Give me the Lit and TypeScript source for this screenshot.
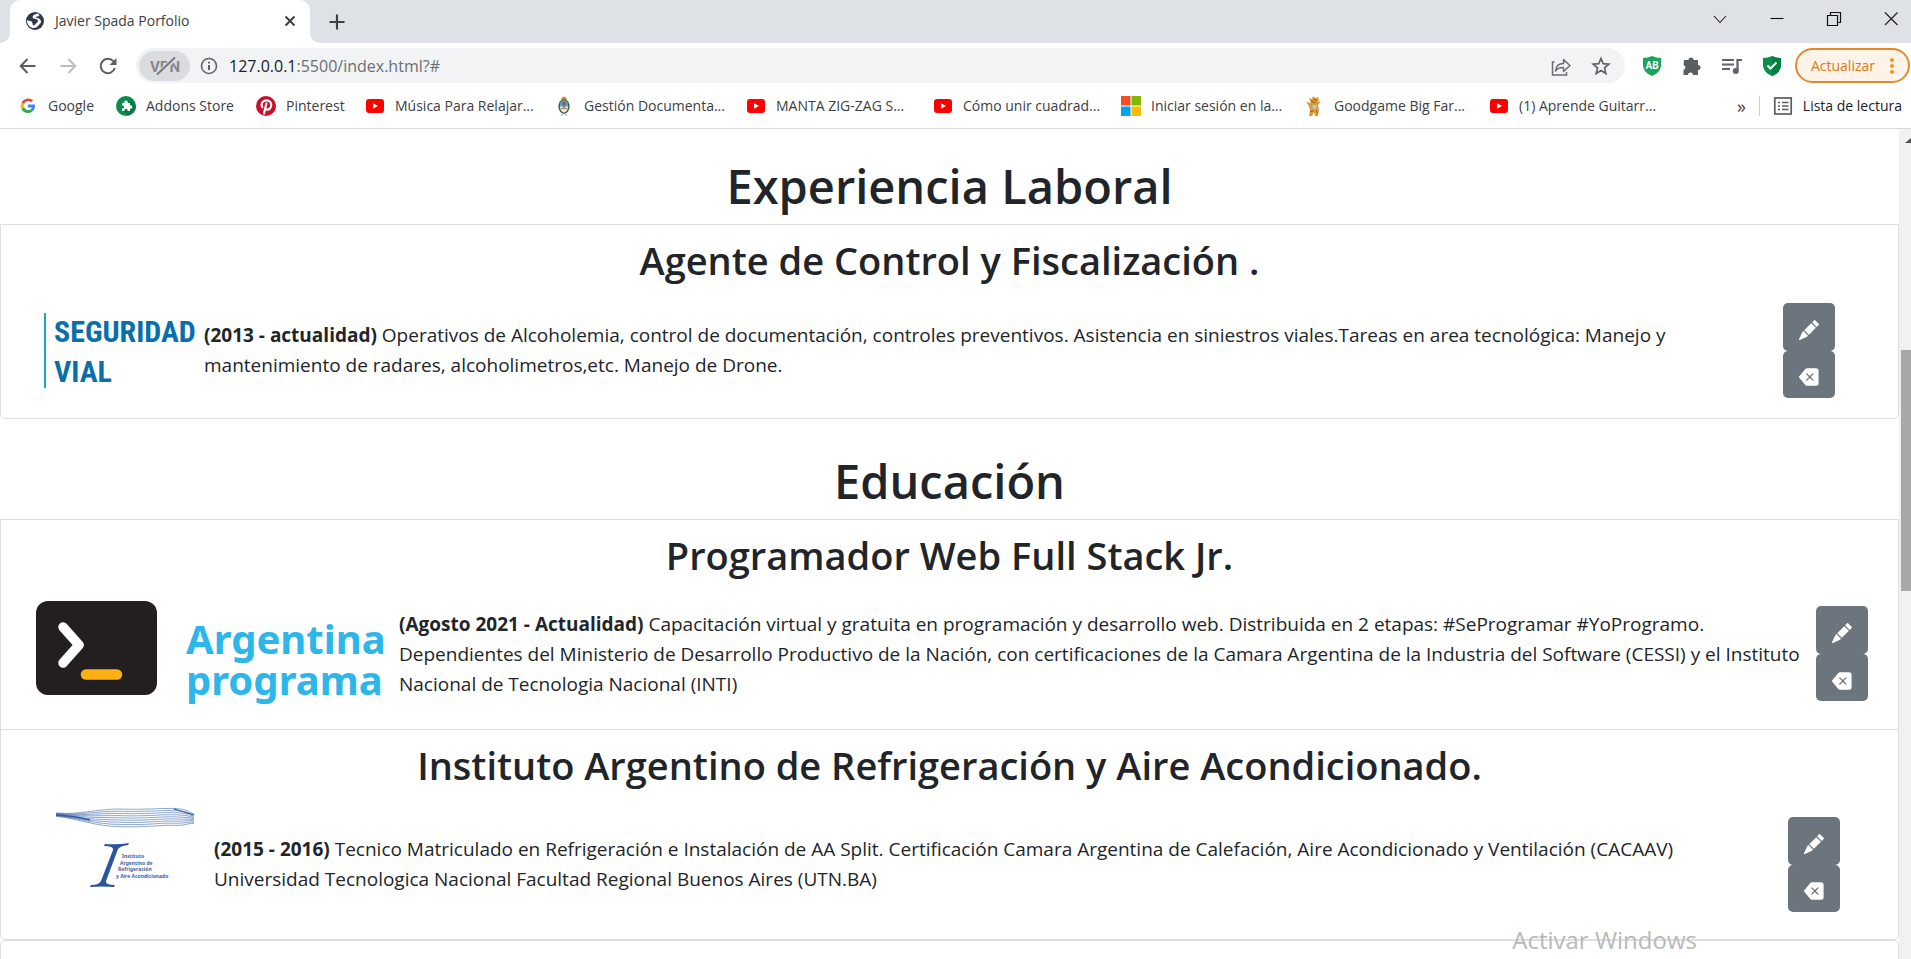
import { LitElement, html, css, svg, nothing, TemplateResult } from "lit";
import { customElement, property } from "lit/decorators.js";

const youtube = svg`<rect x="1" y="3" width="18" height="14" rx="3" fill="#f00"/><path d="M8 7.2v5.6l5-2.8z" fill="#fff"/>`;

const icons: Record<string, TemplateResult> = {
  globe: svg`<circle cx="10" cy="10" r="9" fill="#2f3747"/><path d="M13.5 2.6c-2 .2-4 .8-5.300 2-1 1-.8 2.400.5 3 1.300.6 3.300.4 4 1.500.8 1.300-.2 2.400-1.500 3.200-1 .7-1.200 1.900-2.400 2.200-.9.200-1.200-1.300-1.300-2.300-.2-1.500-1.500-2.200-3-2.500L2 9.300c-.1 3.400 2 6.500 5 7.500 2.600.8 4.800-.3 6.200-2 1-1.300 2.600-2 2.800-3.700.2-1.600-.8-2.600-2-3.500-1-.6-2.400-.5-3.200-1-.4-.5.300-1 1.100-1.100 1.100-.2 2.100-.2 2.400-1.100z" fill="#fff"/>`,
  google: svg`<g transform="translate(1.200 1.200) scale(.86)"><path d="M10 4.300c1.500 0 2.800.5 3.800 1.500l2.300-2.300A9 9 0 0 0 2.700 6l3 2.300A4.700 4.700 0 0 1 10 4.300z" fill="#ea4335"/><path d="M2.700 6a8.600 8.600 0 0 0 0 8l3-2.300a4.800 4.800 0 0 1 0-3.400z" fill="#fbbc05"/><path d="M10 18.500c2.300 0 4.300-.8 5.700-2.100l-2.800-2.200A4.900 4.900 0 0 1 5.700 11.700l-3 2.300a8.500 8.500 0 0 0 7.300 4.500z" fill="#34a853"/><path d="M18.300 8.500H10v3.400h4.700a4 4 0 0 1-1.800 2.400l2.800 2.100c2.300-2.100 3-5 2.600-7.900z" fill="#4285f4"/></g>`,
  addons: svg`<circle cx="10" cy="10" r="10" fill="#0b8a4b"/><path d="M14 3.500 20 10a10 10 0 0 1-8 9.800L6 14z" fill="#077a40"/><path d="M6 7h2.300a1.800 1.800 0 1 1 3.400 0H14v2.300a1.800 1.800 0 1 1 0 3.400V15h-2.600a1.600 1.600 0 1 0-2.800 0H6v-2.500a1.600 1.600 0 1 0 0-3z" fill="#fff"/>`,
  pinterest: svg`<circle cx="10" cy="10" r="10" fill="#c8102a"/><path d="M6.300 11.200C4.300 7.800 6.700 4.400 10.400 4.400c3 0 5 1.900 4.800 4.700-.2 2.700-1.900 4.600-4 4.500-.8 0-1.500-.4-1.800-1M10.400 7.500 8 17.500" fill="none" stroke="#fff" stroke-width="2.200" stroke-linecap="round"/>`,
  youtube,
  arms: svg`<path d="M7 3q3-5 6 0l-1.500 1.500h-3z" fill="#b89035"/><ellipse cx="10" cy="10.500" rx="5.600" ry="7.300" fill="#47633f"/><ellipse cx="10" cy="10.500" rx="4" ry="5.900" fill="#eee8dc"/><path d="M6 10.500a4 5.900 0 0 1 8 0z" fill="#32a9d6"/><path d="M10 6v7" stroke="#7c4a27" stroke-width="1"/><ellipse cx="10" cy="7.500" rx="1.300" ry="1.800" fill="#d3372c"/><path d="m7 13 3-1 3 1M8 19l2-2 2 2" fill="none" stroke="#9c7a5b"/><path d="M8.500 17.500 7.500 20M11.500 17.500l1 2.500" stroke="#79c4e2"/>`,
  microsoft: svg`<path d="M0 0h9.500v9.500H0z" fill="#f25022"/><path d="M10.500 0H20v9.500h-9.500z" fill="#7fba00"/><path d="M0 10.500h9.500V20H0z" fill="#00a4ef"/><path d="M10.500 10.500H20V20h-9.500z" fill="#ffb900"/>`,
  giraffe: svg`<path d="M5 2 8 3l1-3 2 2 3-1 1 3-2 2 4-1-3 4 1 5-1 6h-3l-1-4-2 4H5l1-5-1-5-3-4 5 1z" fill="#d99a35"/><path d="M8 9h5l-1 4H9z" fill="#a8cbd6"/><path d="m7 5 4 2M6 16l3-1M12 15l2 2M10 3l3 2" stroke="#8d5a1c"/>`,
  back: svg`<path d="M17.500 10H3M9.500 3 2.700 10l6.800 7" fill="none" stroke="#5a5e63" stroke-width="2"/>`,
  forward: svg`<path d="M2.500 10H17M10.500 3l6.800 7-6.800 7" fill="none" stroke="#bcbec1" stroke-width="2"/>`,
  reload: svg`<path d="M16.800 12A7.200 7.200 0 1 1 15.300 5.200L17 7" fill="none" stroke="#5a5e63" stroke-width="2"/><path d="M18.500 2v7h-7z" fill="#5a5e63"/>`,
  info: svg`<circle cx="10" cy="10" r="7.500" fill="none" stroke="#5f6368" stroke-width="1.600"/><path d="M10 9v5M10 5.700v1.900" stroke="#5f6368" stroke-width="2"/>`,
  share: svg`<path d="M3.500 6H1.500v13h14v-3" fill="none" stroke="#6b6f73" stroke-width="1.500"/><path d="M4.500 15c.5-5 3.500-7.500 8-7.500V3.500l6.500 6-6.500 6v-4c-4 0-6.500 1-8 3.500z" fill="none" stroke="#6b6f73" stroke-width="1.500" stroke-linejoin="round"/>`,
  star: svg`<path d="m10 2.500 2.200 5.200 5.600.5-4.300 3.700 1.300 5.500-4.800-2.900-4.800 2.900 1.300-5.500L2.200 8.200l5.600-.5z" fill="none" stroke="#5f6368" stroke-width="1.700"/>`,
  adblock: svg`<path d="M10 0q4 2 9 2v8q-1 7-9 10-8-3-9-10V2q5 0 9-2z" fill="#18a45b"/><text x="10" y="13" text-anchor="middle" font-size="10" font-weight="700" fill="#fff" font-family="Roboto, sans-serif">AB</text>`,
  puzzle: svg`<path d="M2 4h4.500a2.500 2.500 0 1 1 5 0H16v5a2.500 2.500 0 1 1 0 5v5h-5a2.500 2.500 0 0 0-5 0H1.500v-5a2.600 2.600 0 0 0 0-5z" fill="#5a5e63"/>`,
  playlist: svg`<path d="M0 4h12M0 8.500h12M0 13h8" stroke="#5f6368" stroke-width="2"/><path d="M15.500 15V4H20" fill="none" stroke="#5f6368" stroke-width="2.200"/><circle cx="13.800" cy="15" r="3" fill="#5f6368"/>`,
  shield: svg`<path d="M10 0q4 2 9 2v8q-1 7-9 10-8-3-9-10V2q5 0 9-2z" fill="#0c8f4c"/><path d="M10 0q4 2 9 2v8q-1 7-9 10z" fill="#057f3f"/><path d="m5.500 9.500 3 3 6-6" fill="none" stroke="#fff" stroke-width="2"/>`,
  list: svg`<rect x="1.800" y="2" width="16.400" height="16" fill="none" stroke="#5a5e63" stroke-width="1.700"/><path d="M5 6.500h2M5 10h2M5 13.500h2M9 6.500h6.500M9 10h6.500M9 13.500h6.500" stroke="#5a5e63" stroke-width="1.600"/>`,
  close: svg`<path d="m5.500 5.500 9 9m0-9-9 9" stroke="#3c4043" stroke-width="2"/>`,
  plus: svg`<path d="M10 2.500v15M2.500 10h15" stroke="#3c4043" stroke-width="2.200"/>`,
  chevron: svg`<path d="m4 7 6 6.500L16 7" fill="none" stroke="#222" stroke-width="1.100"/>`,
  minimize: svg`<path d="M3.500 9.500h13" stroke="#111" stroke-width="1.100"/>`,
  restore: svg`<path d="M3.500 6.500h10v10h-10zM6.500 6.500v-3h10v10h-3" fill="none" stroke="#111" stroke-width="1.200"/>`,
  exit: svg`<path d="m4 3.500 12.500 12.500m0-12.500L4 16" stroke="#222" stroke-width="1.200"/>`,
};

const icon = (name: string) =>
  html`<svg class="icon" viewBox="0 0 20 20" width="20" height="20" aria-hidden="true">${icons[name]}</svg>`;

const bookmarks: [string, string][] = [
  ["google", "Google"],
  ["addons", "Addons Store"],
  ["pinterest", "Pinterest"],
  ["youtube", "Música Para Relajar..."],
  ["arms", "Gestión Documenta..."],
  ["youtube", "MANTA ZIG-ZAG S..."],
  ["youtube", "Cómo unir cuadrad..."],
  ["microsoft", "Iniciar sesión en la..."],
  ["giraffe", "Goodgame Big Far..."],
  ["youtube", "(1) Aprende Guitarr..."],
];

@customElement("browser-chrome")
class BrowserChrome extends LitElement {
  static styles = css`
    :host { display: block; font-family: "Open Sans", "Noto Sans", sans-serif; color: #3c4043; }
    button { border: 0; padding: 0; background: none; font: inherit; color: inherit; display: grid; place-items: center; }
    a { color: inherit; text-decoration: none; white-space: nowrap; }
    .icon { display: block; flex: none; }
    .tabs { height: 43px; background: #dee1e6; display: flex; align-items: stretch; }
    .lead { width: 10px; background: #fff; }
    .lead::before { content: ""; display: block; height: 43px; background: #dee1e6; border-bottom-right-radius: 10px; }
    .tab { width: 300px; box-sizing: border-box; background: #fff; border-radius: 10px 10px 0 0; display: flex; align-items: center; padding: 0 10px 2px 15px; font-size: 14px; }
    .tab-title { flex: 1; margin-left: 10px; }
    .rest { flex: 1; background: #fff; }
    .rest-inner { height: 43px; background: #dee1e6; border-bottom-left-radius: 10px; display: flex; justify-content: space-between; }
    .new { width: 54px; }
    .window { display: flex; }
    .window button { width: 57px; padding-bottom: 6px; }
    .window button:last-child { width: 40px; margin-left: 9px; }
    .bar { height: 45px; background: #fff; display: flex; align-items: center; padding-right: 1px; }
    .nav { display: flex; gap: 20px; padding: 0 18px 0 18px; }
    .address { flex: 1; height: 35px; border-radius: 18px; background: #f1f3f4; display: flex; align-items: center; padding: 0 14px 0 3px; box-sizing: border-box; }
    .vpn { width: 51px; height: 30px; border-radius: 15px; background: #dadce0; margin-right: 9px; }
    .url { flex: 1; position: relative; margin-left: 10px; font-size: 16px; }
    .url input { display: block; border: 0; outline: 0; background: none; width: 100%; font: inherit; padding: 0; color: #6b6f73; }
    .host { position: absolute; left: 0; top: 0; color: #202124; background: #f1f3f4; pointer-events: none; }
    .address-tools { display: flex; gap: 20px; }
    .extensions { display: flex; gap: 20px; padding: 0 13px 0 17px; }
    .update { height: 35px; box-sizing: border-box; border: 2px solid #e58a2b; border-radius: 18px; background: #fdf3e8; color: #e0780f; font-size: 14px; padding: 0 13px 0 14px; display: flex; align-items: center; gap: 14px; }
    .marks { height: 41px; box-sizing: border-box; border-bottom: 1px solid #d9dadc; background: #fff; display: flex; align-items: center; justify-content: space-between; padding: 0 9px 5px 18px; font-size: 14px; }
    .mark-list { display: grid; grid-template-columns: 98px 140px 109px 189px 192px 187px 188px 183px 185px 168px; }
    .mark { display: flex; align-items: center; gap: 10px; }
    .end { display: flex; align-items: center; }
    .more { font-size: 18px; }
    .reading { border-left: 1px solid #ccced1; margin-left: 13px; padding-left: 13px; height: 20px; display: flex; align-items: center; gap: 10px; color: #202124; }
  `;
  render() {
    return html`
      <div class="tabs">
        <div class="lead"></div>
        <div class="tab">
          ${icon("globe")}<span class="tab-title">Javier Spada Porfolio</span>
          <button aria-label="Cerrar pestaña">${icon("close")}</button>
        </div>
        <div class="rest"><div class="rest-inner">
          <button class="new" aria-label="Nueva pestaña">${icon("plus")}</button>
          <div class="window">
            ${["chevron", "minimize", "restore", "exit"].map((n) => html`<button aria-label=${n}>${icon(n)}</button>`)}
          </div>
        </div></div>
      </div>
      <div class="bar">
        <div class="nav">
          ${["back", "forward", "reload"].map((n) => html`<button aria-label=${n}>${icon(n)}</button>`)}
        </div>
        <div class="address">
          <button class="vpn" aria-label="VPN">
            <svg width="32" height="20" viewBox="0 0 32 20"><text x="16" y="15.500" text-anchor="middle" font-size="15" font-weight="700" font-family="Roboto, sans-serif" fill="#85888c">VPN</text><path d="M9 18 26 2" stroke="#dadce0" stroke-width="5"/><path d="M8 18.500 26 1.500" stroke="#77797d" stroke-width="2"/></svg>
          </button>
          ${icon("info")}
          <div class="url">
            <input aria-label="Dirección" value="127.0.0.1:5500/index.html?#" />
            <span class="host" aria-hidden="true">127.0.0.1</span>
          </div>
          <div class="address-tools">
            <button aria-label="Compartir">${icon("share")}</button>
            <button aria-label="Marcador">${icon("star")}</button>
          </div>
        </div>
        <div class="extensions">
          ${["adblock", "puzzle", "playlist", "shield"].map((n) => html`<button aria-label=${n}>${icon(n)}</button>`)}
        </div>
        <button class="update">Actualizar
          <svg width="6" height="18" viewBox="0 0 6 18"><g fill="#f29900"><circle cx="3" cy="3" r="2"/><circle cx="3" cy="9" r="2"/><circle cx="3" cy="15" r="2"/></g></svg>
        </button>
      </div>
      <div class="marks">
        <div class="mark-list">
          ${bookmarks.map(([n, label]) => html`<a class="mark" href="#">${icon(n)}<span>${label}</span></a>`)}
        </div>
        <div class="end">
          <button class="more" aria-label="Más marcadores">»</button>
          <a class="reading" href="#">${icon("list")}<span>Lista de lectura</span></a>
        </div>
      </div>
    `;
  }
}

const wave = Array.from({ length: 9 }, (_, i) => {
  const low = 1 + i * 2.2;
  const mid = 1 + i * 2.1;
  return svg`<path d="M0 ${5 + i * 0.4}C24 ${7 + i * 0.5} 40 ${low} 64 ${low}C90 ${low + 1} 104 ${mid - 1} 118 ${mid - 0.5}S132 ${4 + i * 1.3} 138 ${6 + i * 1.2}"/>`;
});

const logos: Record<string, TemplateResult> = {
  seguridad: html`
    <svg class="logo" width="151" height="75" viewBox="0 0 151 75" role="img" aria-label="Seguridad Vial">
      <path d="M1 0v75" stroke="#1ba6c4" stroke-width="2"/>
      <g fill="#0a6fa9" font-family="'Roboto Condensed', 'Liberation Sans Narrow', sans-serif" font-weight="700" font-size="30">
        <text x="10" y="29">SEGURIDAD</text><text x="10" y="69">VIAL</text>
      </g>
    </svg>`,
  programa: html`
    <svg class="logo" width="354" height="106" viewBox="0 0 354 106" role="img" aria-label="Argentina programa">
      <rect x="0" y="0" width="121" height="94" rx="12" fill="#231f20"/>
      <path d="m27 26 16 18-16 18" fill="none" stroke="#fff" stroke-width="9.500" stroke-linecap="round" stroke-linejoin="round"/>
      <path d="M50 73.500h31" stroke="#fbb116" stroke-width="10.500" stroke-linecap="round"/>
      <g fill="#2cb6ea" font-family="'Noto Sans', 'Open Sans', sans-serif" font-weight="700" font-size="40">
        <text x="150" y="53">Argentina</text><text x="150" y="94">programa</text>
      </g>
    </svg>`,
  instituto: html`
    <svg class="logo" width="138" height="80" viewBox="0 0 138 80" role="img" aria-label="Instituto Argentino de Refrigeración y Aire Acondicionado">
      <g fill="none" stroke="#3e68a8" stroke-width=".6">${wave}</g>
      <path d="M0 7q18 1 34 5M118 1l20 6" stroke="#2f5a9f" stroke-width="1.300" fill="none"/>
      <path d="M49 36q13 1 24-1l-1 2q-8 1-10 4L50 73q-1 4 9 4l-1 2q-12-1-24 0l1-2q8 0 10-4l12-31q1-4-9-4z" fill="#2b569f"/>
      <g fill="#3d64a6" font-family="'Noto Sans', sans-serif" font-weight="700" font-size="5">
        <text x="66" y="50">Instituto</text><text x="64" y="57">Argentino de</text><text x="62" y="63">Refrigeración</text><text x="60" y="70">y Aire Acondicionado</text>
      </g>
    </svg>`,
};

interface Item { title: string; logo: string; when: string; lines: string[] }

const sections: { heading: string; items: Item[] }[] = [
  {
    heading: "Experiencia Laboral",
    items: [{
      title: "Agente de Control y Fiscalización .",
      logo: "seguridad",
      when: "(2013 - actualidad)",
      lines: [
        "Operativos de Alcoholemia, control de documentación, controles preventivos. Asistencia en siniestros viales.Tareas en area tecnológica: Manejo y",
        "mantenimiento de radares, alcoholimetros,etc. Manejo de Drone.",
      ],
    }],
  },
  {
    heading: "Educación",
    items: [
      {
        title: "Programador Web Full Stack Jr.",
        logo: "programa",
        when: "(Agosto 2021 - Actualidad)",
        lines: [
          "Capacitación virtual y gratuita en programación y desarrollo web. Distribuida en 2 etapas: #SeProgramar #YoProgramo.",
          "Dependientes del Ministerio de Desarrollo Productivo de la Nación, con certificaciones de la Camara Argentina de la Industria del Software (CESSI) y el Instituto",
          "Nacional de Tecnologia Nacional (INTI)",
        ],
      },
      {
        title: "Instituto Argentino de Refrigeración y Aire Acondicionado.",
        logo: "instituto",
        when: "(2015 - 2016)",
        lines: [
          "Tecnico Matriculado en Refrigeración e Instalación de AA Split. Certificación Camara Argentina de Calefación, Aire Acondicionado y Ventilación (CACAAV)",
          "Universidad Tecnologica Nacional Facultad Regional Buenos Aires (UTN.BA)",
        ],
      },
    ],
  },
];

@customElement("portfolio-item")
class PortfolioItem extends LitElement {
  @property({ attribute: false }) item!: Item;
  static styles = css`
    :host { display: block; }
    .title { margin: 0; padding-top: 11px; text-align: center; font-size: 38px; line-height: 48px; font-weight: 600; }
    .row { display: flex; align-items: center; box-sizing: border-box; }
    .logo { display: block; flex: none; overflow: visible; }
    .text { flex: 1; margin: 0; font-size: 19px; line-height: 30px; white-space: nowrap; }
    .actions { display: flex; flex-direction: column; }
    .action { width: 52px; height: 48px; margin: 0; padding: 6px 0 0; border: 0; border-radius: 5px; background: #6c757d; color: #fff; display: grid; place-items: center; }
    .action:last-child { height: 47px; }
    .seguridad { height: 134px; padding: 0 63px 2px 43px; gap: 9px; }
    .programa { height: 150px; padding: 0 30px 1px 35px; gap: 9px; }
    .instituto { height: 150px; padding: 0 58px 0 55px; gap: 20px; }
    .instituto .logo { align-self: flex-start; margin-top: 19px; }
  `;
  render() {
    const { title, logo, when, lines } = this.item;
    return html`
      <h2 class="title">${title}</h2>
      <div class="row ${logo}">
        ${logos[logo]}
        <p class="text"><b>${when}</b> ${lines.map((l, i) => html`${i ? html`<br />` : nothing}${l}`)}</p>
        <div class="actions">
          <button class="action" aria-label="Editar">
            <svg width="20" height="20" viewBox="0 0 16 16" fill="currentColor"><path d="M12.854.146a.5.5 0 0 0-.707 0L10.500 1.793 14.207 5.500l1.647-1.646a.5.5 0 0 0 0-.708zM13.500 6.207 9.793 2.500 4.200 8.100l3.700 3.700zM3.500 8.800 2.700 9.600 0 15.300a.5.5 0 0 0 .7.700l5.700-2.700.8-.8z"/></svg>
          </button>
          <button class="action" aria-label="Borrar">
            <svg width="20" height="20" viewBox="0 0 16 16" fill="currentColor"><path d="M15.683 3a2 2 0 0 0-2-2h-7.080a2 2 0 0 0-1.519.698L.241 7.350a1 1 0 0 0 0 1.302l4.843 5.650A2 2 0 0 0 6.603 15h7.080a2 2 0 0 0 2-2zM5.829 5.854a.5.5 0 1 1 .707-.708l2.147 2.147 2.146-2.147a.5.5 0 1 1 .707.708L9.390 8l2.146 2.146a.5.5 0 0 1-.707.708L8.683 8.707l-2.147 2.147a.5.5 0 0 1-.707-.708L7.976 8z"/></svg>
          </button>
        </div>
      </div>
    `;
  }
}

@customElement("app-root")
class AppRoot extends LitElement {
  static styles = css`
    :host { display: flex; flex-direction: column; height: 100vh; overflow: hidden; background: #fff; color: #212529; font-family: "Open Sans", "Noto Sans", sans-serif; position: relative; }
    .view { flex: 1; min-height: 0; display: flex; }
    .page { flex: 1; min-width: 0; overflow: hidden; }
    .heading { margin: 0; padding: 27px 0 8px; font-size: 47px; line-height: 60px; text-align: center; font-weight: 600; }
    .heading.next { padding-top: 32px; }
    .card { border: 1px solid #dfdfdf; border-radius: 0 0 5px 5px; }
    .divided { border-top: 1px solid #dfdfdf; }
    .following { height: 40px; border-radius: 5px; }
    .scroll { width: 12px; background: #f1f1f1; display: flex; flex-direction: column; align-items: flex-end; }
    .arrow { width: 0; height: 0; margin: 9px 0 207px; border-left: 6px solid transparent; border-bottom: 5px solid #505050; }
    .thumb { width: 10px; height: 241px; background: #a8a8a8; }
    .activate { position: absolute; right: 214px; bottom: 2px; font-size: 24px; line-height: 34px; color: #b9b9b9; }
  `;
  render() {
    return html`
      <browser-chrome></browser-chrome>
      <div class="view">
        <main class="page">
          ${sections.map((s, n) => html`
            <h1 class="heading ${n ? "next" : ""}">${s.heading}</h1>
            <section class="card">
              ${s.items.map((item, i) => html`<portfolio-item class=${i ? "divided" : ""} .item=${item}></portfolio-item>`)}
            </section>`)}
          <section class="card following"></section>
        </main>
        <div class="scroll"><div class="arrow"></div><div class="thumb"></div></div>
      </div>
      <div class="activate">Activar Windows</div>
    `;
  }
}
